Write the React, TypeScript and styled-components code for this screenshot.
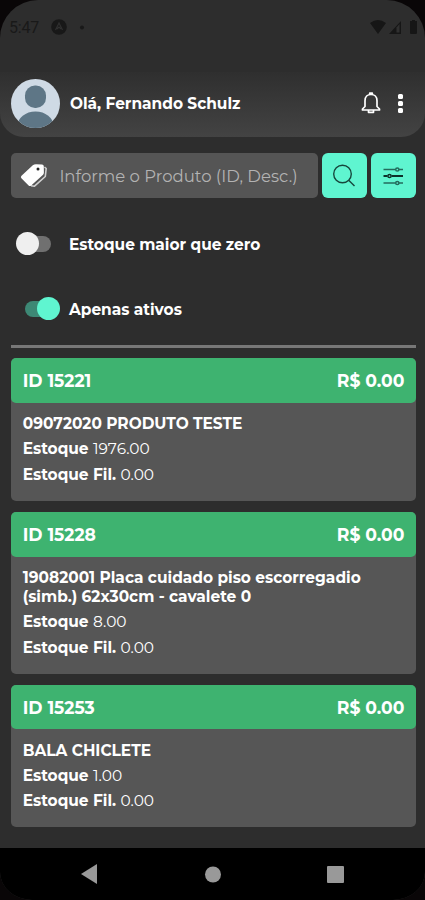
import React from "react";
import styled, { createGlobalStyle } from "styled-components";

const GlobalStyle = createGlobalStyle`
  * { box-sizing: border-box; }
  body { margin: 0; background: #090607; font-family: Montserrat, Inter, sans-serif; }
`;

const Screen = styled.div`
  width: 425px;
  height: 900px;
  display: flex;
  flex-direction: column;
  overflow: hidden;
  background: #2d2d2d;
  border-radius: 38px 38px 32px 32px / 38px 38px 28px 28px;
`;

const StatusBar = styled.div`
  height: 72px;
  flex: none;
  display: flex;
  align-items: flex-start;
  padding: 18px 7px 0 9px;
  color: #191919;
`;

const Clock = styled.span`
  width: 42px;
  font: 400 16px/20px Roboto, sans-serif;
  letter-spacing: -0.2px;
`;

const StatusIcons = styled.div`
  margin-left: auto;
  display: flex;
`;

const Header = styled.header`
  height: 65px;
  flex: none;
  display: flex;
  align-items: center;
  padding: 0 15px 3px 11px;
  background: linear-gradient(#2f2f2f, #434343);
  border-radius: 0 0 24px 24px;
`;

const Label = styled.span<{ $size?: number; $weight?: number }>`
  color: #fff;
  font-size: ${(p) => p.$size ?? 15.4}px;
  font-weight: ${(p) => p.$weight ?? 700};
  white-space: pre;
`;

const Greeting = styled.div`
  flex: 1;
  padding-left: 10px;
`;

const Menu = styled.div`
  display: flex;
  flex-direction: column;
  gap: 2px;
  margin: 1px 7px 0 17px;
  width: 5px;
`;

const Dot = styled.i`
  width: 5px;
  height: 5px;
  border-radius: 1.5px;
  background: #fff;
`;

const Content = styled.main`
  flex: 1;
  min-height: 0;
  padding: 16px 9.4px 0 11.4px;
  display: flex;
  flex-direction: column;
`;

const SearchRow = styled.div`
  display: flex;
  gap: 4.5px;
  height: 45px;
  flex: none;
`;

const Field = styled.div`
  flex: 1;
  display: flex;
  align-items: center;
  padding-left: 9px;
  border-radius: 5px;
  background: #555;
`;

const Placeholder = styled.span`
  margin-left: 11px;
  width: 238px;
  overflow: hidden;
  white-space: nowrap;
  color: #b3b3b3;
  font-size: 16.5px;
  line-height: 24px;
`;

const IconButton = styled.button`
  width: 44.5px;
  height: 45px;
  padding: 0;
  display: grid;
  place-items: center;
  border: 0;
  border-radius: 6px;
  background: #5ff5d0;
`;

const Options = styled.div`
  height: 147px;
  flex: none;
  padding-top: 13px;
`;

const Option = styled.div<{ $on?: boolean }>`
  height: 65px;
  display: flex;
  align-items: center;
  gap: ${(p) => (p.$on ? 10 : 18)}px;
  padding-left: ${(p) => (p.$on ? 13.6 : 5.6)}px;

  ${Label} {
    padding-top: 2px;
  }
`;

const Rail = styled.div<{ $on?: boolean }>`
  width: 34px;
  height: 16px;
  display: flex;
  align-items: center;
  justify-content: ${(p) => (p.$on ? "flex-end" : "flex-start")};
  border-radius: 8px;
  background: ${(p) => (p.$on ? "#3d8875" : "#707070")};
`;

const Thumb = styled.i<{ $on?: boolean }>`
  width: 23px;
  height: 23px;
  flex: none;
  margin: ${(p) => (p.$on ? "0 -1px 0 0" : "0 0 0 -1px")};
  border-radius: 50%;
  background: ${(p) => (p.$on ? "#5ff5d0" : "#efefef")};
`;

const Divider = styled.div`
  height: 2.5px;
  flex: none;
  margin-bottom: 10.5px;
  background: #777;
`;

const Card = styled.article<{ $height: number }>`
  height: ${(p) => p.$height}px;
  flex: none;
  margin-bottom: 11px;
  border-radius: 5px;
  background: #565656;
`;

const CardHead = styled.div`
  height: 44.5px;
  display: flex;
  justify-content: space-between;
  align-items: center;
  padding: 1px 11.3px 0;
  border-radius: 5px;
  background: #3eb370;
`;

const CardBody = styled.div`
  padding: 11.5px 11.3px;
`;

const Title = styled.div`
  display: flex;
  flex-direction: column;
  line-height: 19px;
  margin-bottom: 3px;
`;

const Stock = styled.div`
  display: flex;
  align-items: center;
  gap: 4.5px;
  height: 25.6px;
  line-height: 19px;
`;

const NavBar = styled.nav`
  height: 52px;
  flex: none;
  display: flex;
  align-items: center;
  justify-content: space-between;
  padding: 0 81px;
  background: #000;
`;

const Avatar = () => (
  <svg width="49" height="49" viewBox="0 0 49 49">
    <defs><clipPath id="face"><circle cx="24.5" cy="24.5" r="24.5" /></clipPath></defs>
    <g clipPath="url(#face)">
      <path fill="#cfdae5" d="M0 0h49v49H0z" />
      <rect x="14" y="6.500" width="21" height="22.500" rx="10" fill="#5e7686" />
      <ellipse cx="24.500" cy="47" rx="18" ry="14.500" fill="#5e7686" />
    </g>
  </svg>
);

const Bell = () => (
  <svg width="20" height="24" viewBox="0 0 20 24" fill="none" stroke="#fff" strokeWidth="1.7" strokeLinejoin="round">
    <path d="M8.700 3.500V2h2.600v1.500M4 15.500V9.700C4 6 6.500 3.500 10 3.500s6 2.500 6 6.200v5.800L18.500 18v1h-17v-1zM7.500 19v2.300h5V19" />
  </svg>
);

const Tags = () => (
  <svg width="28" height="26" viewBox="0 0 28 26">
    <path d="M24.500 4l1.700 1.500-.9 8L14.500 23.200l-3.500-.4" fill="none" stroke="#d0d0d0" strokeWidth="1.600" strokeLinejoin="round" />
    <path d="M1.500 12.700L12.800 2.200Q14 1.200 16 1.200l6 .2q1.700.1 1.800 1.800l.1 6.300q0 1.600-1.100 2.600L11.200 22.500q-1.400 1.100-2.600-.1L1.400 15.200q-1.200-1.200.1-2.500z" fill="#fff" />
    <circle cx="18" cy="6" r="1.500" fill="#222" />
  </svg>
);

const Search = () => (
  <svg width="24" height="24" viewBox="0 0 24 24" fill="none" stroke="#17463c" strokeWidth="1.400">
    <circle cx="10.500" cy="10" r="8.800" /><path d="M16.700 16.300L22.500 22" />
  </svg>
);

const Sliders = () => (
  <svg width="22" height="20" viewBox="0 0 22 20" fill="none" stroke="#246b5c" strokeWidth="1.500">
    <path d="M1.500 3.500h12M17 3.500h4M1.500 17h12M17 17h4" />
    <path d="M1.500 10h4m4 0H21" stroke="#0d302a" strokeWidth="1.800" />
    <circle cx="15.300" cy="3.500" r="1.600" /><circle cx="7.500" cy="10" r="1.600" stroke="#0d302a" /><circle cx="15.300" cy="17" r="1.600" />
  </svg>
);

interface Product {
  id: string;
  height: number;
  title: string[];
  stock: string;
}

const products: Product[] = [
  { id: "ID 15221", height: 143, title: ["09072020 PRODUTO TESTE"], stock: "1976.00" },
  {
    id: "ID 15228",
    height: 161.5,
    title: ["19082001 Placa cuidado piso escorregadio", "(simb.) 62x30cm - cavalete 0"],
    stock: "8.00",
  },
  { id: "ID 15253", height: 142, title: ["BALA CHICLETE"], stock: "1.00" },
];

export default function App() {
  return (
    <>
      <GlobalStyle />
      <Screen>
        <StatusBar>
          <Clock>5:47</Clock>
          <svg width="38" height="18" viewBox="0 0 38 18">
            <circle cx="8" cy="9" r="7.800" fill="#181818" />
            <path d="M4.500 12L8 5l3.500 7M6 11l2-2 2 2" fill="none" stroke="#303030" strokeWidth="1.200" />
            <circle cx="31" cy="9.500" r="2" fill="#191919" />
          </svg>
          <StatusIcons>
            <svg width="48" height="18" viewBox="0 0 48 18" fill="#161616">
              <path d="M0 5q8-6 16 0L8 16zM19 16L31 3v13z" />
              <path d="M26.500 9.500V14.500h3V6z" fill="#303030" />
              <path d="M40 3h2V2h3v1h2v12q0 1-1 1h-5q-1 0-1-1z" />
            </svg>
          </StatusIcons>
        </StatusBar>
        <Header>
          <Avatar />
          <Greeting><Label>Olá, Fernando Schulz</Label></Greeting>
          <Bell />
          <Menu><Dot /><Dot /><Dot /></Menu>
        </Header>
        <Content>
          <SearchRow>
            <Field><Tags /><Placeholder>Informe o Produto (ID, Desc.)</Placeholder></Field>
            <IconButton aria-label="Buscar"><Search /></IconButton>
            <IconButton aria-label="Filtros"><Sliders /></IconButton>
          </SearchRow>
          <Options>
            <Option><Rail><Thumb /></Rail><Label>Estoque maior que zero</Label></Option>
            <Option $on><Rail $on><Thumb $on /></Rail><Label>Apenas ativos</Label></Option>
          </Options>
          <Divider />
          {products.map((p) => (
            <Card key={p.id} $height={p.height}>
              <CardHead>
                <Label $size={17.2}>{p.id}</Label>
                <Label $size={17.2}>R$ 0.00</Label>
              </CardHead>
              <CardBody>
                <Title>
                  {p.title.map((line) => <Label key={line}>{line}</Label>)}
                </Title>
                <Stock><Label>Estoque</Label><Label $weight={400}>{p.stock}</Label></Stock>
                <Stock><Label>Estoque Fil.</Label><Label $weight={400}>0.00</Label></Stock>
              </CardBody>
            </Card>
          ))}
        </Content>
        <NavBar>
          <svg width="17" height="20" viewBox="0 0 17 20"><path d="M0 10L16 0v20z" fill="#999" /></svg>
          <svg width="17" height="17" viewBox="0 0 17 17"><circle cx="9" cy="8.500" r="8" fill="#999" /></svg>
          <svg width="17" height="17" viewBox="0 0 17 17"><rect width="17" height="17" rx="1" fill="#999" /></svg>
        </NavBar>
      </Screen>
    </>
  );
}
